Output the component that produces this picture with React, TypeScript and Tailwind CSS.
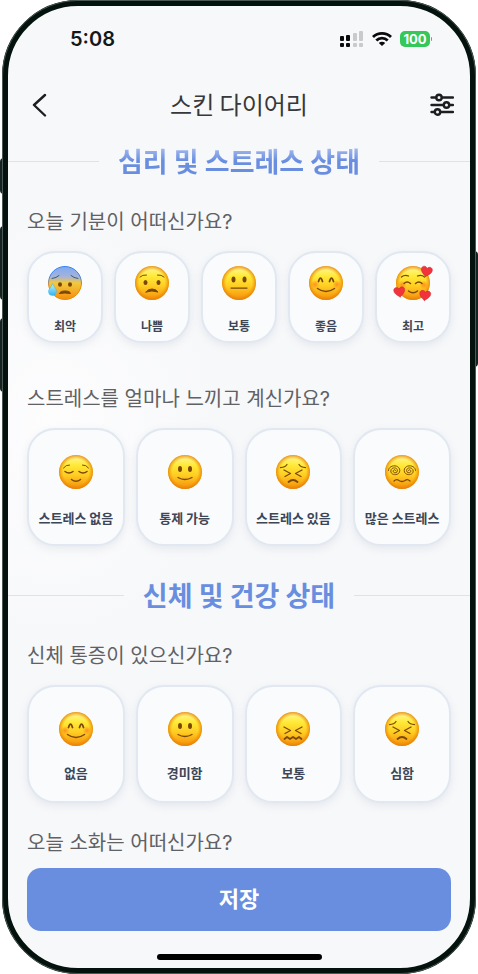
import React, { useState } from 'react';

type FaceName =
  | 'anxious'
  | 'worried'
  | 'neutral'
  | 'happy'
  | 'loved'
  | 'relieved'
  | 'smile'
  | 'persevere'
  | 'dizzy'
  | 'confounded';

interface Option {
  face: FaceName;
  label: string;
}

const moodOptions: Option[] = [
  { face: 'anxious', label: '최악' },
  { face: 'worried', label: '나쁨' },
  { face: 'neutral', label: '보통' },
  { face: 'happy', label: '좋음' },
  { face: 'loved', label: '최고' },
];

const stressOptions: Option[] = [
  { face: 'relieved', label: '스트레스 없음' },
  { face: 'smile', label: '통제 가능' },
  { face: 'persevere', label: '스트레스 있음' },
  { face: 'dizzy', label: '많은 스트레스' },
];

const painOptions: Option[] = [
  { face: 'happy', label: '없음' },
  { face: 'smile', label: '경미함' },
  { face: 'confounded', label: '보통' },
  { face: 'persevere', label: '심함' },
];

const heart = 'M0 10C-7 5-11 1-11-4c0-6 8-8 11-2 3-6 11-4 11 2 0 5-4 9-11 14Z';
const spiral = 'M1 0c0-2-4-2-4 1 0 4 7 4 7-1 0-6-11-6-11 1 0 8 15 8 15-1 0-10-18-11-19 0';

// Facial features, drawn around the centre of the face
const features: Record<FaceName, React.ReactNode> = {
  anxious: (
    <>
      <path d="M-26-9q9-1 14-6M26-9q-9-1-14-6" strokeWidth="2" stroke="#3f5687" />
      <ellipse cx="-10" cy="3" rx="4" ry="4.500" fill="#7a4806" stroke="none" />
      <ellipse cx="10" cy="3" rx="4" ry="4.500" fill="#7a4806" stroke="none" />
      <path d="M-11 21q1-5 11-5t11 5q-11-2-22 0Z" fill="#7a4806" strokeWidth="2" />
      <path d="M-25 2c4 7 8 10 8 15a8 8 0 0 1-16 0c0-5 5-8 8-15Z" fill="url(#drop)" stroke="#3eb4ea" strokeWidth="1" />
    </>
  ),
  worried: (
    <>
      <path d="M-24-12q5-5 13-4M24-12q-5-5-13-4" strokeWidth="2" />
      <ellipse cx="-13" cy="-1" rx="4" ry="5" fill="#7a4806" stroke="none" />
      <ellipse cx="13" cy="-1" rx="4" ry="5" fill="#7a4806" stroke="none" />
      <path d="M-12 18q4-6 12-6t12 6q-12-4-24 0Z" fill="#7a4806" strokeWidth="2" />
    </>
  ),
  neutral: (
    <>
      <ellipse cx="-11" cy="-7" rx="4" ry="6" fill="#7a4806" stroke="none" />
      <ellipse cx="11" cy="-7" rx="4" ry="6" fill="#7a4806" stroke="none" />
      <path d="M-16 10h32" strokeWidth="2.500" />
    </>
  ),
  happy: (
    <>
      <circle cx="-22" cy="3" r="9" fill="url(#cheek)" stroke="none" />
      <circle cx="22" cy="3" r="9" fill="url(#cheek)" stroke="none" />
      <path d="M-15-3q4-14 8 0M15-3q-4-14-8 0" strokeWidth="3.500" />
      <path d="M-17 11q17 12 34 0" />
    </>
  ),
  loved: (
    <>
      <circle cx="-22" cy="4" r="9" fill="url(#cheek)" stroke="none" />
      <circle cx="22" cy="4" r="9" fill="url(#cheek)" stroke="none" />
      <path d="M-23-12q6-5 14-2M23-12q-6-5-14-2" strokeWidth="2.500" />
      <path d="M-18 1q6-6 13 0M18 1q-6-6-13 0" />
      <path d="M-9 16q9 7 18 0" />
      <g fill="#f0343c" stroke="#d51f30" strokeWidth="1">
        <path d={heart} transform="translate(27 -23) rotate(12)" />
        <path d={heart} transform="translate(-27 18) rotate(-8)" />
        <path d={heart} transform="translate(24 25) rotate(8)" />
      </g>
    </>
  ),
  relieved: (
    <>
      <path d="M-25-8q5-7 12-6M25-8q-5-7-12-6" strokeWidth="2" />
      <path d="M-22-1q8 6 16 0M22-1q-8 6-16 0" />
      <path d="M-9 15q9 7 18 0" />
    </>
  ),
  smile: (
    <>
      <ellipse cx="-10" cy="-6" rx="4" ry="6" fill="#7a4806" stroke="none" />
      <ellipse cx="10" cy="-6" rx="4" ry="6" fill="#7a4806" stroke="none" />
      <path d="M-14 11q14 8 28 0" strokeWidth="2.500" />
    </>
  ),
  persevere: (
    <>
      <path d="M-25-9q9 0 13-6M25-9q-9 0-13-6" strokeWidth="2.500" />
      <path d="M-18-4-5 3l-11 6M18-4 5 3l11 6" strokeWidth="2.500" />
      <path d="M-9 20q9-8 18 0" strokeWidth="3.500" />
    </>
  ),
  dizzy: (
    <>
      <path d={spiral} transform="translate(-14 -3) scale(1.2)" strokeWidth="1.600" />
      <path d={spiral} transform="translate(14 -3) scale(-1.2 1.2)" strokeWidth="1.600" />
      <path d="M-16 18q5-5 10-1 6 4 12 0 5-4 10 1" strokeWidth="2.500" />
    </>
  ),
  confounded: (
    <>
      <path d="M-18-4-5 3l-11 6M18-4 5 3l11 6" strokeWidth="2.500" />
      <path d="M-17 20l5-4 6 4 6-4 6 4 6-4 5 4" strokeWidth="3.500" />
    </>
  ),
};

const FaceDefs: React.FC = () => (
  <svg className="absolute h-0 w-0" aria-hidden="true">
    <defs>
      <linearGradient id="skin" x1="0" y1="0" x2="0" y2="1">
        <stop offset="0" stopColor="#fff8a0" />
        <stop offset="0.3" stopColor="#ffea38" />
        <stop offset="0.6" stopColor="#ffcc22" />
        <stop offset="1" stopColor="#f58d0c" />
      </linearGradient>
      <radialGradient id="rim">
        <stop offset="0.75" stopColor="#f08c00" stopOpacity="0" />
        <stop offset="1" stopColor="#e27c05" stopOpacity="0.8" />
      </radialGradient>
      <linearGradient id="cold" x1="0" y1="0" x2="0" y2="1">
        <stop offset="0" stopColor="#7fa9f2" />
        <stop offset="0.3" stopColor="#a3b3da" />
        <stop offset="0.5" stopColor="#f3c93c" />
        <stop offset="1" stopColor="#f58d0c" />
      </linearGradient>
      <linearGradient id="coldRim" x1="0" y1="0" x2="0" y2="1">
        <stop offset="0.3" stopColor="#3b82f0" />
        <stop offset="0.6" stopColor="#e8890c" />
      </linearGradient>
      <radialGradient id="cheek">
        <stop offset="0" stopColor="#ff7a1c" stopOpacity="0.75" />
        <stop offset="1" stopColor="#ff7a1c" stopOpacity="0" />
      </radialGradient>
      <linearGradient id="drop" x1="0" y1="0" x2="0" y2="1">
        <stop offset="0" stopColor="#b9f0ff" />
        <stop offset="1" stopColor="#35b4ef" />
      </linearGradient>
    </defs>
  </svg>
);

const Face: React.FC<{ name: FaceName }> = ({ name }) => (
  <svg
    className="size-9 overflow-visible"
    viewBox="-36 -36 72 72"
    fill="none"
    stroke="#7a4806"
    strokeWidth="3"
    strokeLinecap="round"
    strokeLinejoin="round"
    aria-hidden="true"
  >
    {name === 'anxious' ? (
      <circle r="33" fill="url(#cold)" stroke="url(#coldRim)" strokeWidth="2" />
    ) : (
      <>
        <circle r="34" fill="url(#skin)" stroke="none" />
        <circle r="34" fill="url(#rim)" stroke="none" />
      </>
    )}
    {features[name]}
  </svg>
);

const cardSizes = {
  mood: 'gap-[17px] pt-3 pb-[7px] text-xs',
  stress: 'gap-5 pt-6 pb-[18px] text-[13px]',
  pain: 'gap-[18px] pt-6 pb-5 text-[13px]',
};

interface OptionRowProps {
  question: string;
  options: Option[];
  size: keyof typeof cardSizes;
}

const OptionRow: React.FC<OptionRowProps> = ({ question, options, size }) => {
  const [selected, setSelected] = useState<string | null>(null);

  return (
    <section className="px-[19px]">
      <Question>{question}</Question>
      <div className="mt-[15px] flex gap-[11px]">
        {options.map(option => (
          <button
            key={option.label}
            type="button"
            aria-pressed={selected === option.label}
            onClick={() => setSelected(option.label)}
            className={`flex min-w-0 flex-1 flex-col items-center rounded-[28px] border-2 border-[#e2e8f1] bg-[#fafbfd] font-bold text-[#3d4656] shadow-[0_3px_8px_rgba(100,116,139,0.12)] aria-pressed:border-[#6a8ee0] ${cardSizes[size]}`}
          >
            <Face name={option.face} />
            <span className="leading-4 whitespace-nowrap">{option.label}</span>
          </button>
        ))}
      </div>
    </section>
  );
};

const Question: React.FC<{ children: React.ReactNode }> = ({ children }) => (
  <h3 className="font-['Inter','Noto_Sans_CJK_KR',sans-serif] text-xl leading-7 text-[#5f6164]">{children}</h3>
);

const SectionTitle: React.FC<{ children: React.ReactNode; faded?: boolean }> = ({ children, faded }) => (
  <div className="flex h-[46px] items-center gap-[19px]">
    <span className="h-px flex-1 bg-[#dfe2e6]" />
    <h2
      className={`text-[27px] leading-10 font-bold ${
        faded
          ? 'bg-gradient-to-b from-[#a9bdf0] from-15% to-[#698ddf] to-50% bg-clip-text text-transparent'
          : 'text-[#698ddf]'
      }`}
    >
      {children}
    </h2>
    <span className="h-px flex-1 bg-[#dfe2e6]" />
  </div>
);

const StatusBar: React.FC = () => (
  <div className="flex h-[66px] items-center justify-between pr-[38px] pl-[62px]">
    <span className="font-['Inter',sans-serif] text-xl font-semibold text-[#151719]">5:08</span>
    <div className="flex items-center gap-2">
      {/* Signal */}
      <svg className="h-4 w-6" viewBox="0 0 24 16" aria-hidden="true">
        <g fill="#0b0b0c">
          <rect x="0" y="5" width="4" height="5" rx="1" />
          <rect x="6" y="4" width="4" height="6" rx="1" />
          <rect x="0" y="12" width="4" height="4" rx="1" />
          <rect x="6" y="12" width="4" height="4" rx="1" />
        </g>
        <g fill="#c9cacc">
          <rect x="13" y="2" width="4" height="8" rx="1" />
          <rect x="19" y="0" width="4" height="10" rx="1" />
          <rect x="13" y="12" width="4" height="4" rx="1" />
          <rect x="19" y="12" width="4" height="4" rx="1" />
        </g>
      </svg>
      {/* Wifi */}
      <svg className="h-4 w-5" viewBox="0 0 20 16" fill="none" stroke="#0b0b0c" strokeWidth="2.800" aria-hidden="true">
        <path d="M1 6a12.800 12.800 0 0 1 18 0" />
        <path d="M4.300 9.600a8 8 0 0 1 11.400 0" />
        <path d="M10 15 6.800 12a4.600 4.600 0 0 1 6.400 0Z" fill="#0b0b0c" stroke="none" />
      </svg>
      {/* Battery */}
      <div className="flex items-center gap-px">
        <span className="flex h-4 w-[30px] items-center justify-center rounded-[5px] bg-[#34c759] font-['Inter',sans-serif] text-[13px] leading-4 font-bold text-white">
          100
        </span>
        <span className="h-1 w-px rounded-r bg-[#34c759]" />
      </div>
    </div>
  </div>
);

const Header: React.FC = () => (
  <header className="flex h-[66px] items-center justify-between px-4">
    <button type="button" aria-label="뒤로">
      <svg className="size-6" viewBox="0 0 24 24" fill="none" stroke="#1d1e20" strokeWidth="2.400" strokeLinecap="round" strokeLinejoin="round">
        <path d="M21 2 10 12 21 22.500" />
      </svg>
    </button>
    <h1 className="pb-0.5 text-2xl leading-8 text-[#37383b]">스킨 다이어리</h1>
    <button type="button" aria-label="필터">
      <svg className="size-6" viewBox="0 0 24 24" fill="none" stroke="#1d1e20" strokeWidth="2.400" strokeLinecap="round">
        <path d="M1.500 4.500h4.500M12 4.500h11M1.500 12h12M20 12h3M1.500 19h3M11 19h12" />
        <circle cx="9" cy="4.500" r="2.700" />
        <circle cx="16.500" cy="12" r="2.700" />
        <circle cx="7.500" cy="19" r="2.700" />
      </svg>
    </button>
  </header>
);

const App: React.FC = () => (
  <div className="relative bg-white px-0.5 font-['Noto_Sans_CJK_KR','Noto_Sans',sans-serif]">
    {/* Side buttons */}
    <span className="absolute top-[158px] left-0 h-9 w-1 rounded-l-sm bg-[#14231f]" />
    <span className="absolute top-[226px] left-0 h-[74px] w-1 rounded-l-sm bg-[#14231f]" />
    <span className="absolute top-[318px] left-0 h-[74px] w-1 rounded-l-sm bg-[#14231f]" />
    <span className="absolute top-[251px] right-0 h-[116px] w-1 rounded-r-sm bg-[#14231f]" />

    <div className="relative overflow-hidden rounded-[76px] border-6 border-[#04120e] bg-[#f7f8fa] bg-[radial-gradient(ellipse_at_10%_44%,#fdfdfe_0%,#f7f8fa_28%)] outline -outline-offset-1 outline-[#4c5855]">
      <FaceDefs />
      <StatusBar />
      <Header />
      <main>
        <SectionTitle faded>심리 및 스트레스 상태</SectionTitle>
        <div className="mt-6 flex flex-col gap-[42px]">
          <OptionRow question="오늘 기분이 어떠신가요?" options={moodOptions} size="mood" />
          <OptionRow question="스트레스를 얼마나 느끼고 계신가요?" options={stressOptions} size="stress" />
        </div>
        <div className="mt-[26px]">
          <SectionTitle>신체 및 건강 상태</SectionTitle>
        </div>
        <div className="mt-6">
          <OptionRow question="신체 통증이 있으신가요?" options={painOptions} size="pain" />
        </div>
        <div className="mt-[26px] px-[19px]">
          <Question>오늘 소화는 어떠신가요?</Question>
        </div>
      </main>
      <footer className="px-[19px] pt-[11px] pb-2">
        <button type="button" className="h-[63px] w-full rounded-[14px] bg-[#698ddf] pb-1 text-[22px] font-bold text-white">
          저장
        </button>
        <div className="mx-auto mt-[23px] h-1.5 w-[165px] rounded-full bg-black" />
      </footer>
    </div>
  </div>
);

export default App;
